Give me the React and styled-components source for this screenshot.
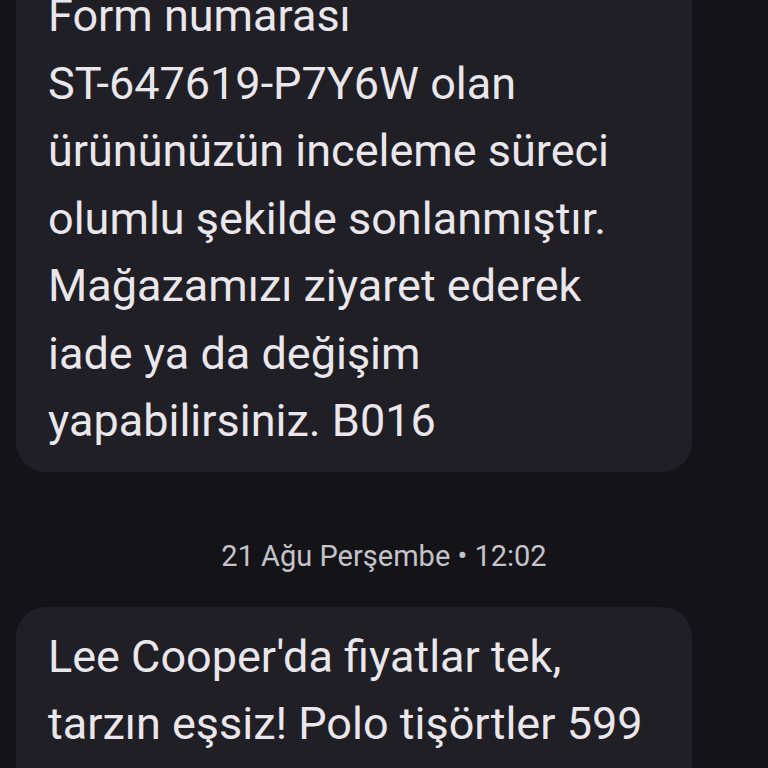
import styled, { createGlobalStyle } from 'styled-components';

const GlobalStyle = createGlobalStyle`
  html, body {
    margin: 0;
    padding: 0;
    background: #141318;
  }
  body {
    font-family: Roboto, "Noto Sans", "Liberation Sans", sans-serif;
    -webkit-font-smoothing: antialiased;
  }
`;

const Screen = styled.div`
  width: 768px;
  height: 768px;
  overflow: hidden;
  background: #141318;
`;

const Thread = styled.div`
  display: flex;
  flex-direction: column;
  align-items: flex-start;
  margin-top: -42px;
  padding: 0 16px;
`;

const Bubble = styled.div`
  box-sizing: border-box;
  width: 676px;
  background: #211f26;
  border-radius: 30px;
  padding: ${(p) => (p.$first ? '24px 32px 17px' : '16px 32px 18px')};
`;

const BubbleText = styled.p`
  margin: 0;
  color: #e9e7ec;
  font-size: 45px;
  line-height: 67.5px;
  font-weight: 400;
  white-space: pre-line;
`;

const Stamp = styled.div`
  align-self: stretch;
  text-align: center;
  margin: 66px 0 33px;
  color: #c5c3ca;
  font-size: 29px;
  line-height: 36px;
`;

const messages = [
  {
    text: 'Form numarası\nST-647619-P7Y6W olan\nürününüzün inceleme süreci\nolumlu şekilde sonlanmıştır.\nMağazamızı ziyaret ederek\niade ya da değişim\nyapabilirsiniz. B016',
  },
  {
    stamp: '21 Ağu Perşembe • 12:02',
    text: "Lee Cooper'da fiyatlar tek,\ntarzın eşsiz! Polo tişörtler 599\nTL'den başlayan fiyatlarla!",
  },
];

const App = () => {
  return (
    <>
      <GlobalStyle />
      <Screen>
        <Thread>
          {messages.map((m, i) => (
            <div key={i} style={{ display: 'contents' }}>
              {m.stamp && <Stamp>{m.stamp}</Stamp>}
              <Bubble $first={i === 0}>
                <BubbleText>{m.text}</BubbleText>
              </Bubble>
            </div>
          ))}
        </Thread>
      </Screen>
    </>
  );
};

export default App;
